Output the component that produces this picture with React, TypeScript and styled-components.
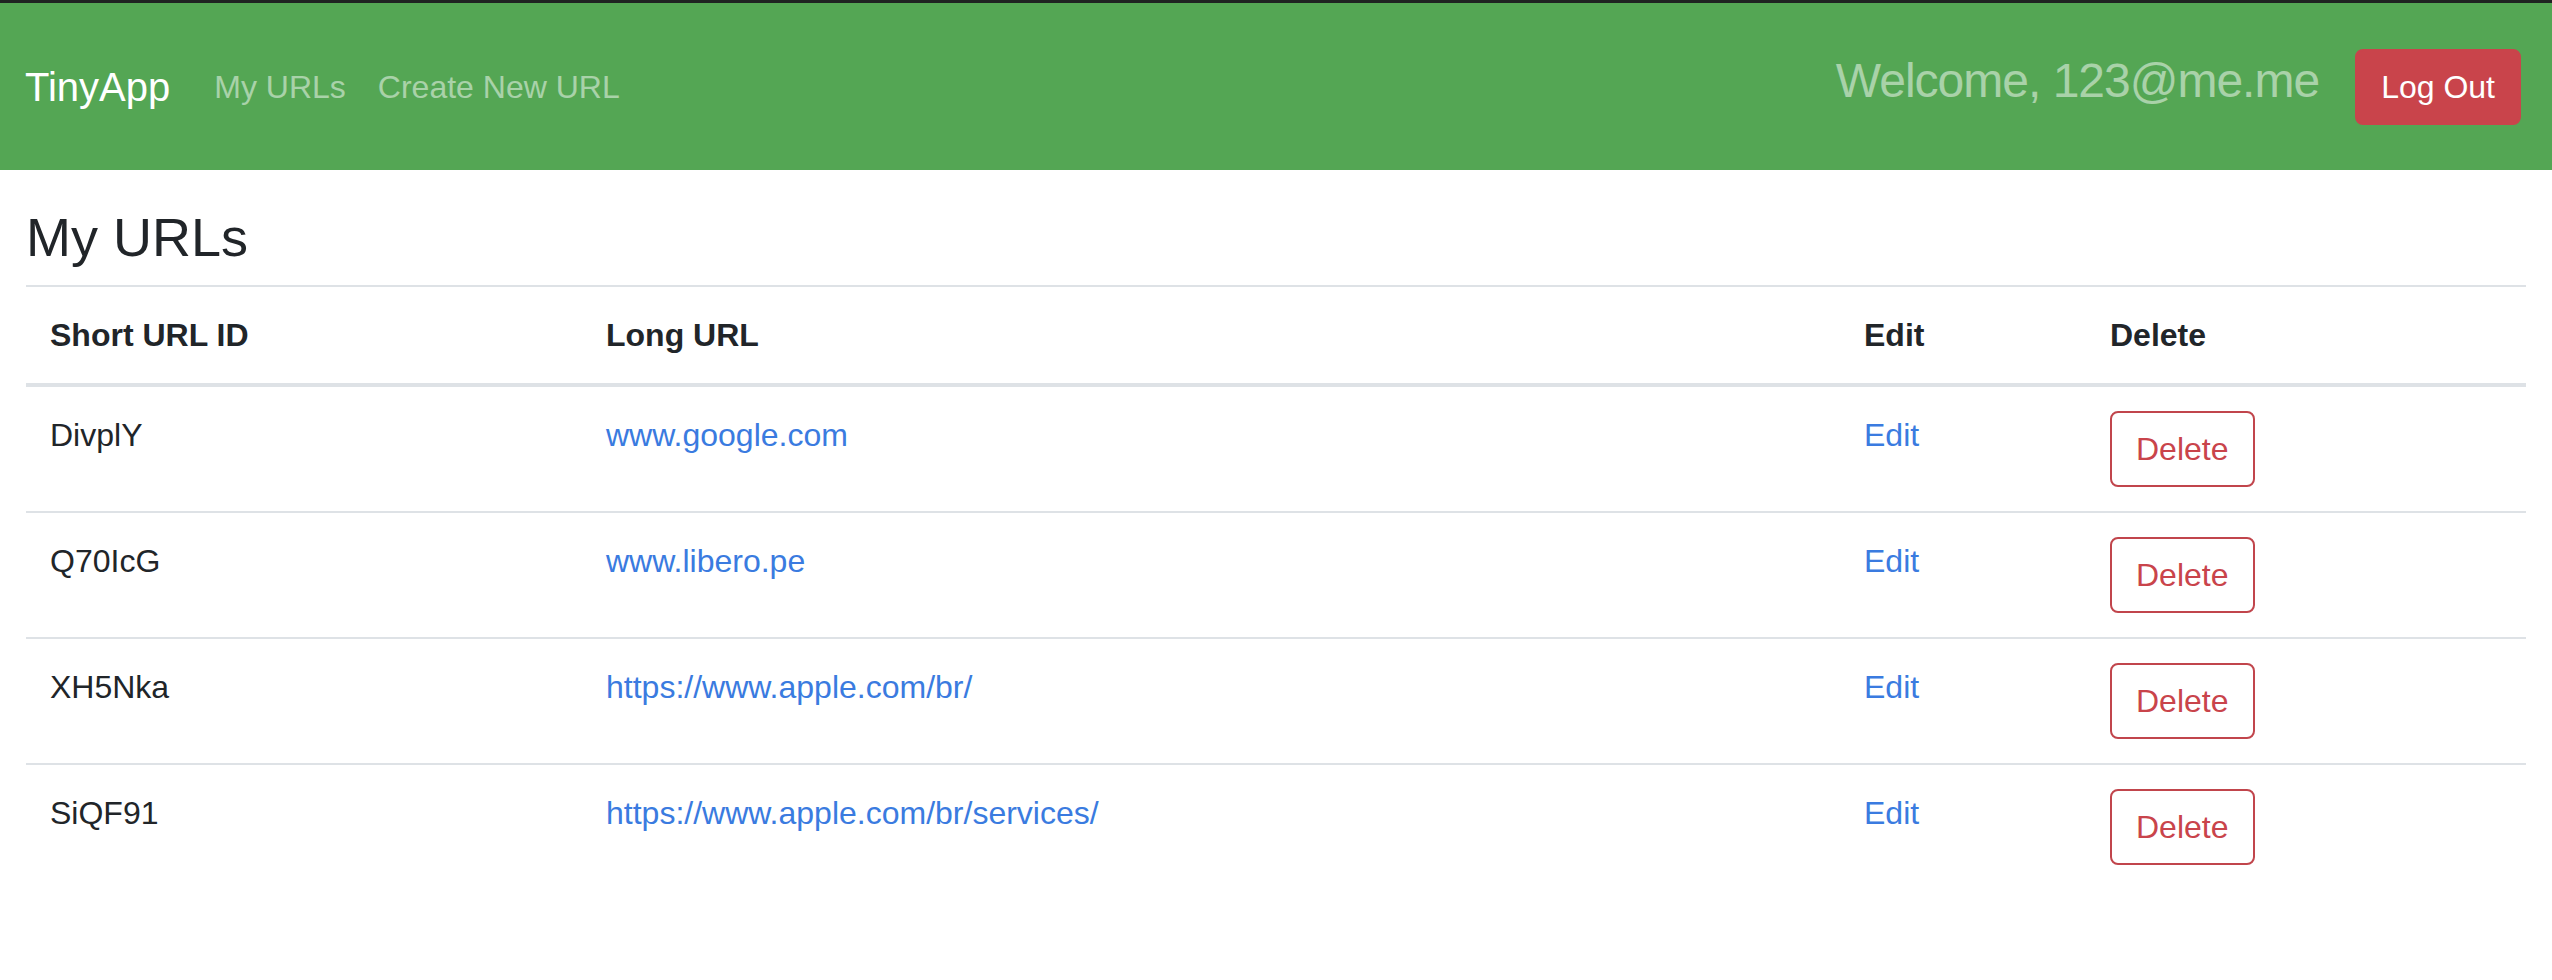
import React from "react";
import styled, { createGlobalStyle } from "styled-components";

const GlobalStyle = createGlobalStyle`
  html, body {
    margin: 0;
    padding: 0;
    background: #ffffff;
  }
  body {
    font-family: "Liberation Sans", Arial, Helvetica, sans-serif;
    font-size: 32px;
    line-height: 1.5;
    color: #212529;
  }
  * { box-sizing: border-box; }
`;

const TopStrip = styled.div`
  height: 3px;
  background: #1f2321;
`;

const Navbar = styled.nav`
  display: flex;
  align-items: center;
  height: 167px;
  padding: 0 31px 0 25px;
  background: #54a654;
`;

const Brand = styled.a`
  font-size: 40px;
  line-height: 1.5;
  color: #ffffff;
  text-decoration: none;
  margin-right: 28px;
`;

const NavLink = styled.a`
  font-size: 32px;
  line-height: 1.5;
  padding: 0 16px;
  color: rgba(255, 255, 255, 0.5);
  text-decoration: none;
`;

const RightGroup = styled.div`
  display: flex;
  align-items: center;
  margin-left: auto;
`;

const Welcome = styled.h4`
  margin: 0 36px 11px 0;
  font-size: 48px;
  font-weight: 400;
  line-height: 1.2;
  letter-spacing: -1px;
  color: rgba(255, 255, 255, 0.5);
`;

const Button = styled.button<{ $variant: "solid" | "outline" }>`
  display: inline-block;
  font-family: inherit;
  font-size: 32px;
  line-height: 48px;
  padding: 12px 24px;
  border-radius: 8px;
  border: 2px solid ${(p) => (p.$variant === "solid" ? "#c9444b" : "#c1454c")};
  background: ${(p) => (p.$variant === "solid" ? "#c9444b" : "#ffffff")};
  color: ${(p) => (p.$variant === "solid" ? "#ffffff" : "#c9444b")};
  cursor: pointer;
`;

const Main = styled.main`
  padding: 0 26px;
`;

const Heading = styled.h3`
  margin: 35px 0 15px;
  font-size: 54px;
  font-weight: 400;
  line-height: 1.2;
  color: #212529;
`;

const Table = styled.table`
  width: 100%;
  border-collapse: collapse;
  table-layout: fixed;
`;

const Col = styled.col<{ $w: number }>`
  width: ${(p) => p.$w}px;
`;

const Th = styled.th`
  padding: 24px;
  text-align: left;
  vertical-align: bottom;
  font-weight: 700;
  border-top: 2px solid #dee2e6;
  border-bottom: 4px solid #dee2e6;
`;

const Td = styled.td`
  padding: 24px;
  vertical-align: top;
  border-top: 2px solid #dee2e6;
`;

const Link = styled.a`
  color: #3a7be0;
  text-decoration: none;
`;

const urls = [
  { id: "DivplY", long: "www.google.com" },
  { id: "Q70IcG", long: "www.libero.pe" },
  { id: "XH5Nka", long: "https://www.apple.com/br/" },
  { id: "SiQF91", long: "https://www.apple.com/br/services/" },
];

export default function App() {
  return (
    <>
      <GlobalStyle />
      <TopStrip />
      <Navbar>
        <Brand href="#">TinyApp</Brand>
        <NavLink href="#">My URLs</NavLink>
        <NavLink href="#">Create New URL</NavLink>
        <RightGroup>
          <Welcome>Welcome, 123@me.me</Welcome>
          <Button $variant="solid">Log Out</Button>
        </RightGroup>
      </Navbar>
      <Main>
        <Heading>My URLs</Heading>
        <Table>
          <colgroup>
            <Col $w={556} />
            <Col $w={1258} />
            <Col $w={246} />
            <Col $w={440} />
          </colgroup>
          <thead>
            <tr>
              <Th>Short URL ID</Th>
              <Th>Long URL</Th>
              <Th>Edit</Th>
              <Th>Delete</Th>
            </tr>
          </thead>
          <tbody>
            {urls.map((u) => (
              <tr key={u.id}>
                <Td>{u.id}</Td>
                <Td>
                  <Link href="#">{u.long}</Link>
                </Td>
                <Td>
                  <Link href="#">Edit</Link>
                </Td>
                <Td>
                  <Button $variant="outline">Delete</Button>
                </Td>
              </tr>
            ))}
          </tbody>
        </Table>
      </Main>
    </>
  );
}
